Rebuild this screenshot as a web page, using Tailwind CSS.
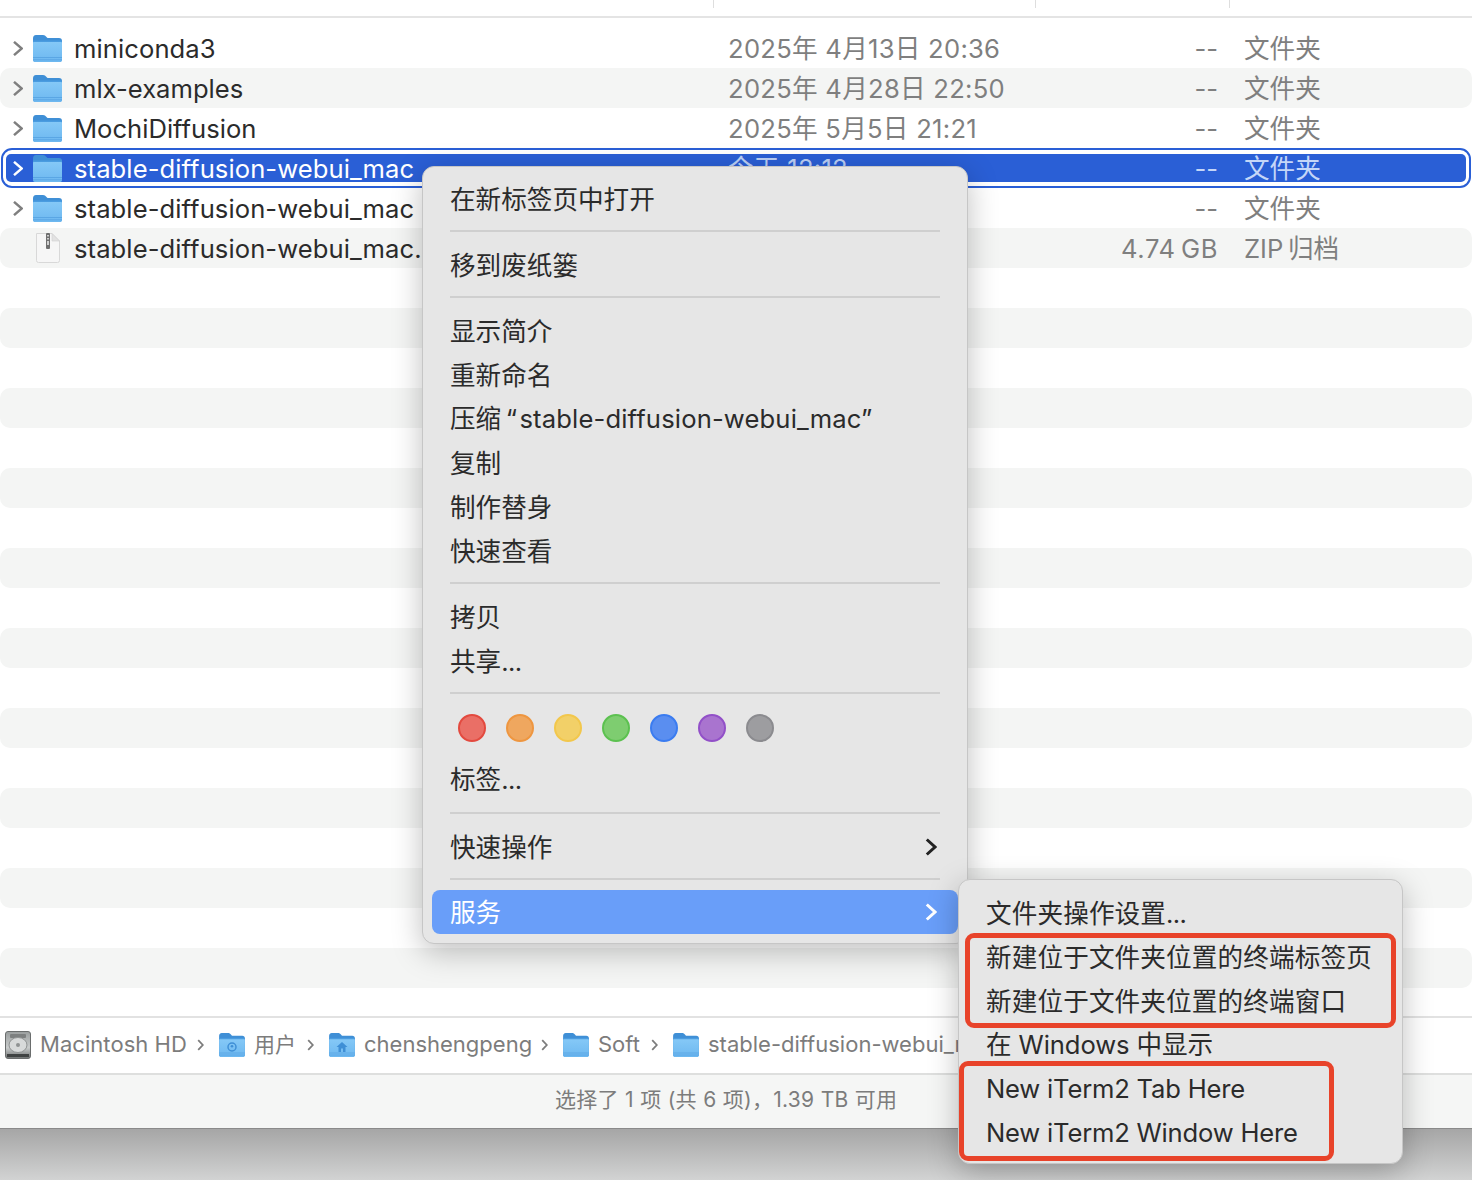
<!doctype html>
<html lang="zh-CN">
<head>
<meta charset="utf-8">
<title>Finder</title>
<script src="https://cdn.jsdelivr.net/npm/@tailwindcss/browser@4"></script>
</head>
<body class="bg-white">
<svg width="0" height="0" class="absolute">
  <defs>
    <linearGradient id="fb" x1="0" y1="0" x2="0" y2="1"><stop offset="0" stop-color="#86c9f7"/><stop offset="1" stop-color="#6db8f0"/></linearGradient>
    <linearGradient id="hd" x1="0" y1="0" x2="0" y2="1"><stop offset="0" stop-color="#9a9e9e"/><stop offset="0.6" stop-color="#c9cccc"/><stop offset="1" stop-color="#6d7070"/></linearGradient>
    <symbol id="folder" viewBox="0 0 29 27">
      <path d="M0 3.500C0 1.500 1 0 3 0h7c1.500 0 2.500 .7 3.500 2L14.500 3H26c2 0 3 1 3 3v18c0 2-1 3-3 3H3c-2 0-3-1-3-3z" fill="#3f8fd6"/>
      <rect x="0" y="6" width="29" height="21" rx="2" fill="url(#fb)"/>
      <rect x="0" y="5.500" width="29" height="1.500" fill="#4a9ce0"/>
      <path d="M0 22.500h29M0 24.800h29" stroke="#5aa6e4" stroke-width="1"/>
    </symbol>
    <symbol id="chev" viewBox="0 0 10 15">
      <path d="M1 .9 8.800 7.500 1 14.100" fill="none" stroke="currentColor" stroke-width="2.500"/>
    </symbol>
    <symbol id="crumb" viewBox="0 0 7 12">
      <path d="M1.200 1.200 5.800 6 1.200 10.800" fill="none" stroke="currentColor" stroke-width="1.800"/>
    </symbol>
  </defs>
</svg>

<div class="relative w-[1472px] h-[1180px] overflow-hidden flex flex-col bg-white text-[#2b2b2b] font-['Inter','Noto_Sans_CJK_SC',sans-serif] text-[25.6px]">

  <!-- column header -->
  <div class="h-[18px] shrink-0 border-b-2 border-[#e4e4e4] relative">
    <div class="flex h-[8px]">
      <div class="w-[714px] border-r border-[#dedede]"></div>
      <div class="w-[322px] border-r border-[#dedede]"></div>
      <div class="w-[194px] border-r border-[#dedede]"></div>
    </div>
  </div>

  <!-- file list -->
  <div class="flex-1 pt-[10px] flex flex-col">
    <div class="h-10 shrink-0 rounded-[10px] flex items-center pl-[13px] whitespace-nowrap">
      <svg class="w-[10px] h-[15px] text-[#7f7f7f]"><use href="#chev"/></svg>
      <svg class="ml-[10px] w-[29px] h-[27px]"><use href="#folder"/></svg>
      <span class="ml-3 w-[654px] pt-[2px] tracking-[0.08px]">miniconda3</span>
      <span class="w-[381px] pt-[3px] tracking-[0.27px] text-[#7f7f7f]">2025年 4月13日 20:36</span>
      <span class="w-[109px] pt-[2px] text-right text-[#7f7f7f]">--</span>
      <span class="ml-[26px] pt-[3px] text-[#7f7f7f]">文件夹</span>
    </div>
    <div class="h-10 shrink-0 rounded-[10px] bg-[#f4f5f4] flex items-center pl-[13px] whitespace-nowrap">
      <svg class="w-[10px] h-[15px] text-[#7f7f7f]"><use href="#chev"/></svg>
      <svg class="ml-[10px] w-[29px] h-[27px]"><use href="#folder"/></svg>
      <span class="ml-3 w-[654px] pt-[2px]">mlx-examples</span>
      <span class="w-[381px] pt-[3px] tracking-[0.27px] text-[#7f7f7f]">2025年 4月28日 22:50</span>
      <span class="w-[109px] pt-[2px] text-right text-[#7f7f7f]">--</span>
      <span class="ml-[26px] pt-[3px] text-[#7f7f7f]">文件夹</span>
    </div>
    <div class="h-10 shrink-0 rounded-[10px] flex items-center pl-[13px] whitespace-nowrap">
      <svg class="w-[10px] h-[15px] text-[#7f7f7f]"><use href="#chev"/></svg>
      <svg class="ml-[10px] w-[29px] h-[27px]"><use href="#folder"/></svg>
      <span class="ml-3 w-[654px] pt-[2px]">MochiDiffusion</span>
      <span class="w-[381px] pt-[3px] tracking-[0.27px] text-[#7f7f7f]">2025年 5月5日 21:21</span>
      <span class="w-[109px] pt-[2px] text-right text-[#7f7f7f]">--</span>
      <span class="ml-[26px] pt-[3px] text-[#7f7f7f]">文件夹</span>
    </div>
    <!-- selected row -->
    <div class="h-10 shrink-0 mx-px rounded-[11px] border-2 border-[#2a5fd6] px-[3px] py-[4px]">
      <div class="h-full rounded-[5px] bg-[#2a5fd6] flex items-center pl-[7px] whitespace-nowrap text-white">
        <svg class="w-[10px] h-[15px] text-white"><use href="#chev"/></svg>
        <svg class="ml-[10px] w-[29px] h-[27px]"><use href="#folder"/></svg>
        <span class="ml-3 w-[654px] pt-[2px] tracking-[0.08px]">stable-diffusion-webui_mac</span>
        <span class="w-[381px] pt-[3px] tracking-[0.27px] text-[#bcd0f6]">今天 12:12</span>
        <span class="w-[109px] pt-[2px] text-right text-[#c4d6f8]">--</span>
        <span class="ml-[26px] pt-[3px] text-[#c4d6f8]">文件夹</span>
      </div>
    </div>
    <div class="h-10 shrink-0 rounded-[10px] flex items-center pl-[13px] whitespace-nowrap">
      <svg class="w-[10px] h-[15px] text-[#7f7f7f]"><use href="#chev"/></svg>
      <svg class="ml-[10px] w-[29px] h-[27px]"><use href="#folder"/></svg>
      <span class="ml-3 w-[654px] pt-[2px] tracking-[0.08px]">stable-diffusion-webui_mac</span>
      <span class="w-[381px] pt-[3px] tracking-[0.27px] text-[#7f7f7f]">今天 12:10</span>
      <span class="w-[109px] pt-[2px] text-right text-[#7f7f7f]">--</span>
      <span class="ml-[26px] pt-[3px] text-[#7f7f7f]">文件夹</span>
    </div>
    <div class="h-10 shrink-0 rounded-[10px] bg-[#f4f5f4] flex items-center pl-[13px] whitespace-nowrap">
      <span class="w-[10px] h-[15px]"></span>
      <svg class="ml-[10px] w-[29px] h-[30px]" viewBox="0 0 29 30">
        <path d="M3.500.5H19L26.500 8V27.500a2 2 0 0 1-2 2h-19a2 2 0 0 1-2-2z" fill="#f6f6f6" stroke="#d8d8d8"/>
        <path d="M19 .5V8h7.500z" fill="#e2e2e2" stroke="#d0d0d0" stroke-width=".6"/>
        <rect x="13" y="0" width="4" height="16" rx="1" fill="#6f6f6f"/>
        <rect x="14.200" y="2" width="1.600" height="1.500" fill="#e8e8e8"/>
        <rect x="14.200" y="5" width="1.600" height="1.500" fill="#e8e8e8"/>
        <rect x="14.200" y="8" width="1.600" height="4" fill="#e8e8e8"/>
      </svg>
      <span class="ml-3 w-[654px] pt-[2px] tracking-[0.08px]">stable-diffusion-webui_mac.zip</span>
      <span class="w-[381px] pt-[3px] tracking-[0.27px] text-[#7f7f7f]">今天 12:08</span>
      <span class="w-[109px] pt-[2px] tracking-[0.6px] text-right text-[#7f7f7f]">4.74&thinsp;GB</span>
      <span class="ml-[26px] pt-[3px] text-[#7f7f7f]">ZIP&thinsp;归档</span>
    </div>
    <div class="h-10 shrink-0"></div><div class="h-10 shrink-0 rounded-[10px] bg-[#f4f5f4]"></div>
    <div class="h-10 shrink-0"></div><div class="h-10 shrink-0 rounded-[10px] bg-[#f4f5f4]"></div>
    <div class="h-10 shrink-0"></div><div class="h-10 shrink-0 rounded-[10px] bg-[#f4f5f4]"></div>
    <div class="h-10 shrink-0"></div><div class="h-10 shrink-0 rounded-[10px] bg-[#f4f5f4]"></div>
    <div class="h-10 shrink-0"></div><div class="h-10 shrink-0 rounded-[10px] bg-[#f4f5f4]"></div>
    <div class="h-10 shrink-0"></div><div class="h-10 shrink-0 rounded-[10px] bg-[#f4f5f4]"></div>
    <div class="h-10 shrink-0"></div><div class="h-10 shrink-0 rounded-[10px] bg-[#f4f5f4]"></div>
    <div class="h-10 shrink-0"></div><div class="h-10 shrink-0 rounded-[10px] bg-[#f4f5f4]"></div>
    <div class="h-10 shrink-0"></div><div class="h-10 shrink-0 rounded-[10px] bg-[#f4f5f4]"></div>
  </div>

  <!-- path bar -->
  <div class="h-[57px] shrink-0 border-t-2 border-[#e2e2e2] flex items-center pl-[5px] pb-[2px] whitespace-nowrap text-[22px] text-[#7c7c7c] overflow-hidden">
    <svg class="w-[26px] h-[28px] shrink-0" viewBox="0 0 26 28">
      <rect x=".5" y=".5" width="25" height="27" rx="2.500" fill="url(#hd)" stroke="#6a6d6d"/>
      <rect x="5" y="3" width="16" height="4" rx="1" fill="#7d8080"/>
      <ellipse cx="13" cy="14" rx="9" ry="7.500" fill="#d8dada" stroke="#8f9292"/>
      <circle cx="13" cy="14" r="2" fill="#8f9292"/>
      <rect x="2" y="23" width="22" height="3" fill="#3f4242"/>
    </svg>
    <span class="ml-[9px] w-[147px] shrink-0 tracking-[0.05px]">Macintosh HD</span>
    <svg class="ml-[10px] w-[7px] h-3 shrink-0"><use href="#crumb"/></svg>
    <svg class="ml-[15px] w-[26px] h-6 shrink-0" viewBox="0 0 26 24">
      <use href="#folder" width="26" height="24"/>
      <circle cx="13" cy="14" r="4" fill="none" stroke="#3f8fd6" stroke-width="1.500"/>
      <circle cx="13" cy="13.300" r="1.300" fill="#3f8fd6"/>
    </svg>
    <span class="ml-[9px] w-[42px] shrink-0 text-[21px]">用户</span>
    <svg class="ml-[11px] w-[7px] h-3 shrink-0"><use href="#crumb"/></svg>
    <svg class="ml-[15px] w-[26px] h-6 shrink-0" viewBox="0 0 26 24">
      <use href="#folder" width="26" height="24"/>
      <path d="M13 9 7.500 14H9.500V19H12V15.500H14V19H16.500V14H18.500z" fill="#3f8fd6"/>
    </svg>
    <span class="ml-[9px] w-[167px] shrink-0">chenshengpeng</span>
    <svg class="ml-[10px] w-[7px] h-3 shrink-0"><use href="#crumb"/></svg>
    <svg class="ml-[15px] w-[26px] h-6 shrink-0"><use href="#folder"/></svg>
    <span class="ml-[9px] w-[43px] shrink-0">Soft</span>
    <svg class="ml-[10px] w-[7px] h-3 shrink-0"><use href="#crumb"/></svg>
    <svg class="ml-[15px] w-[26px] h-6 shrink-0"><use href="#folder"/></svg>
    <span class="ml-[9px] shrink-0">stable-diffusion-webui_mac</span>
  </div>

  <!-- status bar -->
  <div class="h-[55px] shrink-0 border-t-2 border-[#dedfde] bg-[#f5f6f5] flex items-center pl-[555px] pb-[3px] text-[21px] tracking-[0.3px] text-[#7c7c7c] whitespace-nowrap">
    选择了 1 项 (共 6 项)，1.39 TB 可用
  </div>

  <!-- desktop -->
  <div class="h-[52px] shrink-0 border-t border-[#8a8a8a] bg-gradient-to-b from-[#a6a6a6] to-[#d2d3d3]"></div>

  <!-- context menu -->
  <div class="absolute left-[422px] top-[166px] w-[546px] h-[778px] rounded-[12px] border border-[#c6c6c6] bg-[#e6e6e6] pt-[10px] shadow-[0_8px_30px_rgba(0,0,0,0.25)] whitespace-nowrap">
    <div class="h-11 flex items-center pl-[27px] pt-[2px]">在新标签页中打开</div>
    <div class="h-[2px] mx-[27px] mt-[9px] mb-[11px] bg-[#cfcfcf]"></div>
    <div class="h-11 flex items-center pl-[27px] pt-[2px]">移到废纸篓</div>
    <div class="h-[2px] mx-[27px] mt-[9px] mb-[11px] bg-[#cfcfcf]"></div>
    <div class="h-11 flex items-center pl-[27px] pt-[2px]">显示简介</div>
    <div class="h-11 flex items-center pl-[27px] pt-[2px]">重新命名</div>
    <div class="h-11 flex items-center pl-[27px]">
      <span>压缩&thinsp;“&hairsp;<span class="tracking-[0.15px]">stable-diffusion-webui_mac”</span></span>
    </div>
    <div class="h-11 flex items-center pl-[27px] pt-[2px]">复制</div>
    <div class="h-11 flex items-center pl-[27px] pt-[2px]">制作替身</div>
    <div class="h-11 flex items-center pl-[27px] pt-[2px]">快速查看</div>
    <div class="h-[2px] mx-[27px] mt-[9px] mb-[11px] bg-[#cfcfcf]"></div>
    <div class="h-11 flex items-center pl-[27px] pt-[2px]">拷贝</div>
    <div class="h-11 flex items-center pl-[27px] pt-[2px]"><span>共享<span class="tracking-[-0.6px]">...</span></span></div>
    <div class="h-[2px] mx-[27px] mt-[9px] mb-[11px] bg-[#cfcfcf]"></div>
    <div class="h-[52px] flex items-start gap-[20px] pl-[35px] pt-[9px]">
      <span class="w-[28px] h-[28px] rounded-full border-2 border-[#e34a3f] bg-[#ea6f66]"></span>
      <span class="w-[28px] h-[28px] rounded-full border-2 border-[#ee9640] bg-[#efa75f]"></span>
      <span class="w-[28px] h-[28px] rounded-full border-2 border-[#f2c74c] bg-[#f2d068]"></span>
      <span class="w-[28px] h-[28px] rounded-full border-2 border-[#5cc150] bg-[#7ecd70]"></span>
      <span class="w-[28px] h-[28px] rounded-full border-2 border-[#3b7cf0] bg-[#5a8ef0]"></span>
      <span class="w-[28px] h-[28px] rounded-full border-2 border-[#9250c8] bg-[#a974cf]"></span>
      <span class="w-[28px] h-[28px] rounded-full border-2 border-[#8b8b8f] bg-[#9d9da0]"></span>
    </div>
    <div class="h-11 flex items-center pl-[27px] pt-[2px]"><span>标签<span class="tracking-[-0.6px]">...</span></span></div>
    <div class="h-[2px] mx-[27px] mt-[11px] mb-[11px] bg-[#cfcfcf]"></div>
    <div class="h-11 flex items-center justify-between pl-[27px] pr-[30px]">
      <span class="pt-[2px]">快速操作</span>
      <svg class="w-[12px] h-[18px]" viewBox="0 0 12 18"><path d="M1.800 1.500 10 9 1.800 16.500" fill="none" stroke="#222" stroke-width="3"/></svg>
    </div>
    <div class="h-[2px] mx-[27px] mt-[9px] mb-[10px] bg-[#cfcfcf]"></div>
    <div class="h-11 mx-[9px] rounded-[8px] bg-[#699ef9] text-white flex items-center justify-between pl-[18px] pr-[21px]">
      <span class="pt-[2px]">服务</span>
      <svg class="w-[12px] h-[18px]" viewBox="0 0 12 18"><path d="M1.800 1.500 10 9 1.800 16.500" fill="none" stroke="#fff" stroke-width="3"/></svg>
    </div>
  </div>

  <!-- submenu -->
  <div class="absolute left-[958px] top-[879px] w-[445px] h-[285px] rounded-[12px] border border-[#c6c6c6] bg-[#e6e6e6] pt-[11px] shadow-[0_8px_30px_rgba(0,0,0,0.25)] whitespace-nowrap">
    <div class="h-11 flex items-center pl-[27px] pt-[2px]"><span class="tracking-[0.13px]">文件夹操作设置<span class="tracking-[-0.6px]">...</span></span></div>
    <div class="h-11 flex items-center pl-[27px] pt-[2px] tracking-[0.13px]">新建位于文件夹位置的终端标签页</div>
    <div class="h-11 flex items-center pl-[27px] pt-[2px] tracking-[0.13px]">新建位于文件夹位置的终端窗口</div>
    <div class="h-11 flex items-center pl-[27px] tracking-[-0.1px]">在 Windows 中显示</div>
    <div class="h-11 flex items-center pl-[27px] tracking-[-0.2px]">New iTerm2 Tab Here</div>
    <div class="h-11 flex items-center pl-[27px] tracking-[-0.2px]">New iTerm2 Window Here</div>
  </div>

  <!-- red annotations -->
  <div class="absolute left-[965px] top-[933px] w-[431px] h-[95px] rounded-[9px] border-[5px] border-[#e8432a]"></div>
  <div class="absolute left-[959px] top-[1061px] w-[375px] h-[100px] rounded-[9px] border-[5px] border-[#e8432a]"></div>
</div>
</body>
</html>
